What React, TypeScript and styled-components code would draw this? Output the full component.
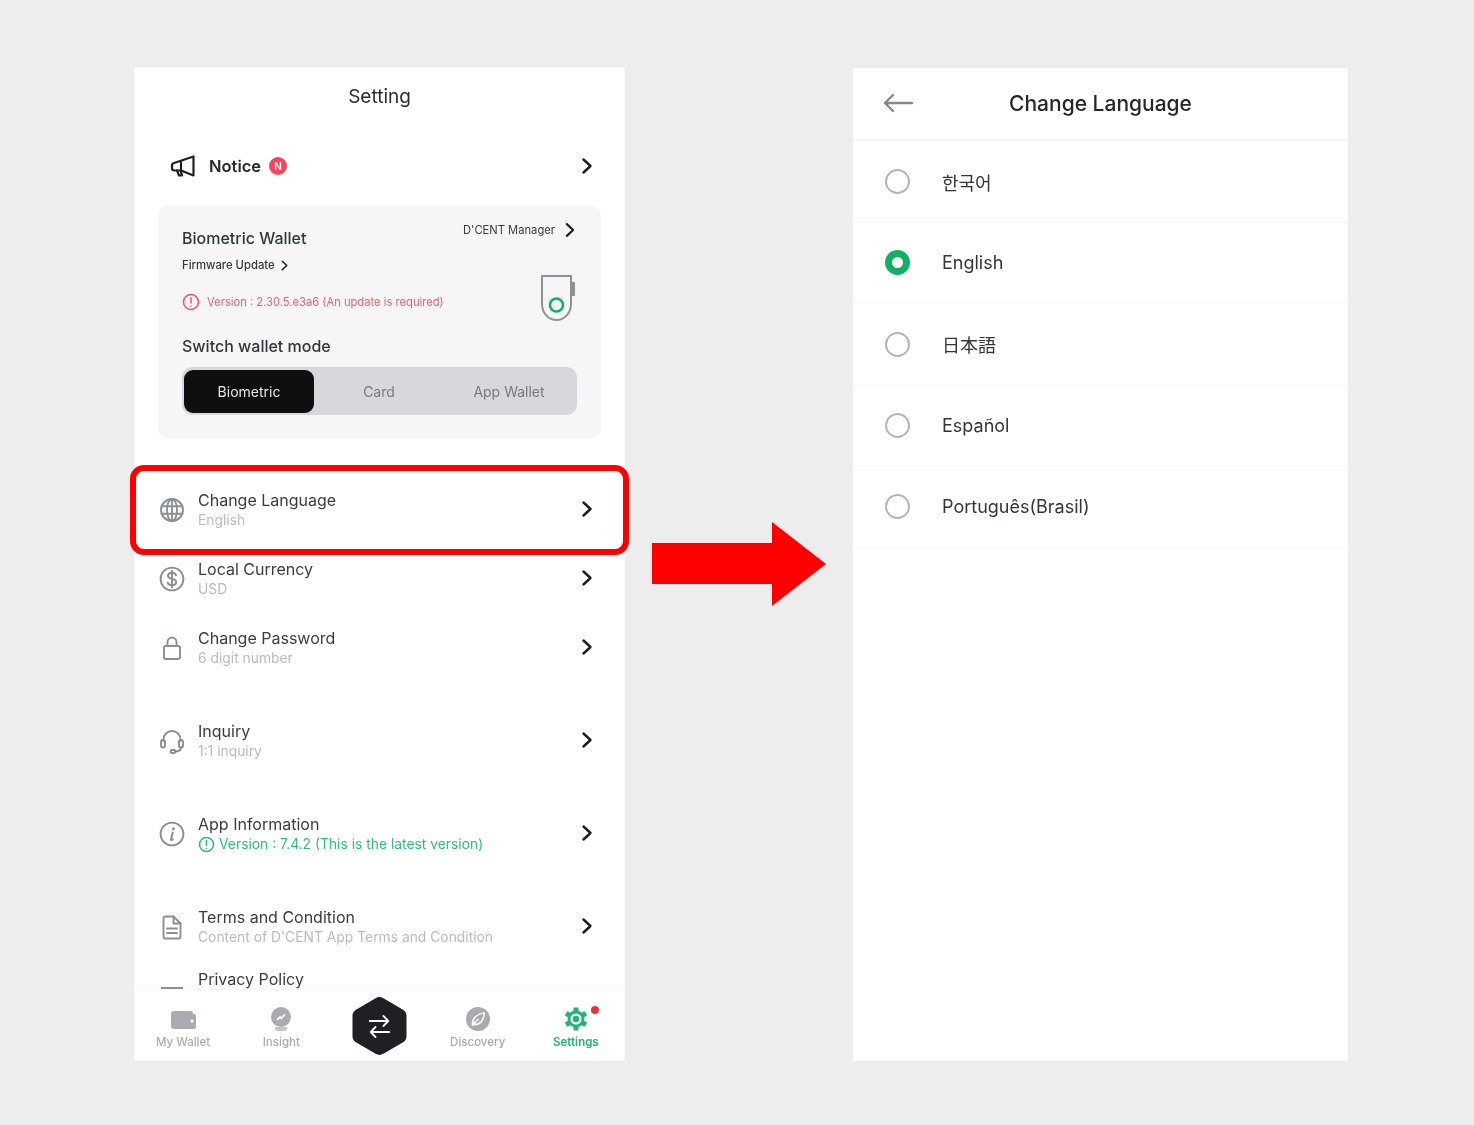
import React from 'react';
import styled, { createGlobalStyle } from 'styled-components';

const GlobalStyle = createGlobalStyle`
  html, body {
    margin: 0;
    padding: 0;
    background: #ededed;
  }
  * {
    box-sizing: border-box;
  }
`;

const Page = styled.div`
  width: 1474px;
  height: 1125px;
  display: flex;
  align-items: flex-start;
  padding: 67px 0 0 134px;
  background: #ededed;
  font-family: Inter, "Noto Sans CJK KR", sans-serif;
  overflow: hidden;
  filter: blur(0.4px);
`;

const Phone = styled.div`
  width: 491px;
  height: 994px;
  display: flex;
  flex-direction: column;
  background: #fff;
`;

const Title = styled.div`
  height: 59px;
  margin-bottom: 1px;
  display: flex;
  align-items: center;
  justify-content: center;
  font-size: 19px;
  color: #2b2d31;
`;

const NoticeRow = styled.div`
  height: 78px;
  display: flex;
  align-items: center;
  padding: 0 28px 0 36px;
`;

const NoticeLabel = styled.span`
  margin-left: 13px;
  font-size: 16.5px;
  font-weight: 600;
  color: #26282c;
`;

const NoticeBadge = styled.span`
  width: 18px;
  height: 18px;
  margin-left: 8px;
  border-radius: 50%;
  background: #f9455c;
  color: #fff;
  font-size: 10px;
  font-weight: 600;
  display: flex;
  align-items: center;
  justify-content: center;
`;

const Chevron = styled.svg`
  width: 20px;
  height: 20px;
  margin-left: auto;
  flex: none;
  fill: none;
  stroke: #1c1d20;
  stroke-width: 2.4;
  stroke-linecap: round;
  stroke-linejoin: round;
`;

const RowChevron = styled(Chevron)`
  margin-top: -2px;
`;

const WalletCard = styled.div`
  width: 443px;
  height: 234px;
  margin: 0 24px 36.5px;
  padding: 16px 24px 0;
  border-radius: 12px;
  background: #f6f6f6;
  display: flex;
  flex-direction: column;
`;

const CardTop = styled.div`
  display: flex;
  align-items: flex-start;
  justify-content: space-between;
`;

const CardTitle = styled.div`
  margin-top: 8px;
  font-size: 16px;
  font-weight: 500;
  line-height: 19px;
  color: #33353a;
`;

const ManagerLink = styled.div`
  display: flex;
  align-items: center;
  gap: 6px;
  margin-right: -2px;
  font-size: 11.2px;
  color: #3a3c41;
`;

const SmallChevron = styled(Chevron)<{ $size: number }>`
  margin-left: 0;
  width: ${(props) => props.$size}px;
  height: ${(props) => props.$size}px;
`;

const FirmwareLink = styled.div`
  margin-top: 9px;
  height: 16px;
  display: flex;
  align-items: center;
  gap: 3px;
  font-size: 11.3px;
  font-weight: 500;
  color: #36383d;
`;

const VersionRow = styled.div`
  display: flex;
  align-items: center;
  justify-content: space-between;
  height: 66px;
`;

const VersionText = styled.div`
  display: flex;
  align-items: center;
  gap: 7px;
  font-size: 11.2px;
  color: #ef5f72;
  margin-top: -8px;
`;

const DeviceIcon = styled.svg`
  width: 37px;
  height: 50px;
  flex: none;
  margin-right: 1px;
  margin-top: -16px;
`;

const SwitchLabel = styled.div`
  margin-top: -2px;
  font-size: 16px;
  font-weight: 500;
  line-height: 19px;
  color: #33353a;
`;

const Segments = styled.div`
  margin-top: 11px;
  height: 48px;
  padding: 3px 2px 2px;
  display: grid;
  grid-template-columns: repeat(3, 130px);
  border-radius: 10px;
  background: #d7d8dc;
`;

const Segment = styled.div<{ $active?: boolean }>`
  display: flex;
  align-items: center;
  justify-content: center;
  border-radius: 9px;
  font-size: 14px;
  background: ${(props) => (props.$active ? '#0f0f10' : 'transparent')};
  color: ${(props) => (props.$active ? '#e4e4e6' : '#77797f')};
`;

const MenuList = styled.div`
  flex: 1;
  min-height: 0;
  display: flex;
  flex-direction: column;
  clip-path: inset(-20px -10px 0 -10px);
`;

const MenuRow = styled.div<{ $tall?: boolean; $highlight?: boolean }>`
  position: relative;
  height: ${(props) => (props.$tall ? 93 : 69)}px;
  flex: none;
  display: flex;
  align-items: center;
  padding: 0 28px 0 25px;

  ${(props) =>
    props.$highlight &&
    `&::after {
      content: '';
      position: absolute;
      left: -4px;
      right: -4px;
      top: -10.5px;
      bottom: -10.5px;
      border: 6px solid #ff0000;
      border-radius: 14px;
    }`}
`;

const SectionGap = styled.div`
  height: 12px;
  flex: none;
`;

const MenuIcon = styled.svg`
  width: 26px;
  height: 26px;
  flex: none;
  fill: none;
  stroke: #8b8e97;
  stroke-width: 1.9;
  stroke-linecap: round;
  stroke-linejoin: round;
`;

const MenuText = styled.div`
  margin-left: 13px;
  display: flex;
  flex-direction: column;
`;

const MenuTitle = styled.div`
  font-size: 16px;
  line-height: 20px;
  color: #3a3c41;
`;

const MenuSub = styled.div<{ $green?: boolean }>`
  display: flex;
  align-items: center;
  gap: 4px;
  font-size: 13.85px;
  line-height: 20px;
  color: ${(props) => (props.$green ? '#2fbd7c' : '#b9bbc0')};
`;

const ClippedRow = styled.div`
  height: 40px;
  margin-top: -5px;
  flex: none;
  display: flex;
  align-items: flex-start;
  padding: 0 28px 0 27px;
`;

const ClippedIcon = styled.div`
  width: 22px;
  height: 2px;
  margin-top: 18px;
  background: #8b8e97;
`;

const ClippedTitle = styled(MenuTitle)`
  margin-left: 15px;
`;

const TabBar = styled.div`
  position: relative;
  height: 72px;
  flex: none;
  display: grid;
  grid-template-columns: repeat(5, 1fr);
  border-top: 1px solid #f6f6f6;
  background: #fff;
`;

const Tab = styled.div<{ $active?: boolean; $center?: boolean }>`
  position: relative;
  display: flex;
  flex-direction: column;
  align-items: center;
  padding-top: ${(props) => (props.$center ? 0 : 17)}px;
  font-size: 11.5px;
  font-weight: ${(props) => (props.$active ? 600 : 500)};
  color: ${(props) => (props.$active ? '#22b573' : '#a9abb0')};
`;

const TabIcon = styled.svg`
  width: 28px;
  height: 26px;
  margin-bottom: 2px;
  flex: none;
`;

const Dot = styled.span`
  position: absolute;
  top: 16px;
  left: 64px;
  width: 8px;
  height: 8px;
  border-radius: 50%;
  background: #e8333a;
`;

const SwapHex = styled.svg`
  width: 55px;
  height: 60px;
  margin-top: 6px;
  flex: none;
`;

const ArrowColumn = styled.div`
  width: 228px;
  height: 994px;
  flex: none;
  display: flex;
  justify-content: center;
  padding-top: 455px;
`;

const BigArrow = styled.svg`
  width: 174px;
  height: 84px;
  flex: none;
`;

const LanguagePanel = styled.div`
  width: 495px;
  height: 993px;
  margin-top: 1px;
  background: #fff;
  display: flex;
  flex-direction: column;
`;

const PanelHeader = styled.div`
  position: relative;
  height: 73.4px;
  flex: none;
  display: flex;
  align-items: center;
  justify-content: center;
  border-bottom: 2px solid #f7f7f7;
  font-size: 21px;
  font-weight: 500;
  color: #25272b;
`;

const BackIcon = styled.svg`
  position: absolute;
  left: 30px;
  top: 24px;
  width: 30px;
  height: 22px;
  fill: none;
  stroke: #85878f;
  stroke-width: 2.4;
  stroke-linecap: round;
  stroke-linejoin: round;
`;

const LangRow = styled.div`
  height: 81.3px;
  flex: none;
  display: flex;
  align-items: center;
  gap: 32px;
  padding-left: 32px;
  border-bottom: 1px solid #f8f8f8;
  font-size: 18px;
  color: #33353a;
`;

const Radio = styled.span<{ $checked?: boolean }>`
  width: 25px;
  height: 25px;
  flex: none;
  border-radius: 50%;
  background: #fff;
  border: ${(props) => (props.$checked ? '7.5px solid #0fb066' : '2px solid #b4b5bc')};
`;

const languages = [
  { label: '한국어' },
  { label: 'English', checked: true },
  { label: '日本語' },
  { label: 'Español' },
  { label: 'Português(Brasil)' },
];

const chevronPath = <path d="M6.5 3.5 13.5 10 6.5 16.5" />;

const menuIcons: Record<string, React.ReactNode> = {
  globe: (
    <>
      <circle cx="13" cy="13" r="11" />
      <ellipse cx="13" cy="13" rx="5" ry="11" />
      <path d="M2.6 9.3h20.8M2.6 16.7h20.8M13 2v22" />
    </>
  ),
  dollar: (
    <>
      <circle cx="13" cy="13" r="11.4" />
      <path d="M17 9.2c-.6-1.6-2.2-2.4-4-2.4-2.3 0-4 1.2-4 3 0 4.2 8.2 2.1 8.2 6.2 0 1.9-1.8 3.2-4.2 3.2-2 0-3.7-.9-4.3-2.6M13 4.6v16.8" />
    </>
  ),
  lock: (
    <>
      <rect x="5" y="11" width="16" height="13" rx="2" />
      <path d="M8.5 11V7a4.5 4.5 0 0 1 9 0v4" />
    </>
  ),
  headset: (
    <>
      <path d="M4.5 13v-1.5a8.5 8.5 0 0 1 17 0V13" />
      <rect x="2" y="12" width="4" height="7.5" rx="2" />
      <rect x="20" y="12" width="4" height="7.5" rx="2" />
      <path d="M22 19.5c0 2.5-2.5 4-6 4" />
      <rect x="11.5" y="22" width="5" height="3" rx="1.5" />
    </>
  ),
  info: (
    <>
      <circle cx="13" cy="13" r="11.4" />
      <path d="M13.8 11.5 12 18.3c-.2.8.6 1 1.7.2" strokeWidth="2" />
      <circle cx="14.4" cy="7.8" r=".6" strokeWidth="1.8" />
    </>
  ),
  file: (
    <>
      <path d="M4.5 4.5a2 2 0 0 1 2-2h8l7 7v13a2 2 0 0 1-2 2h-13a2 2 0 0 1-2-2z" />
      <path d="M14.5 2.5v7h7M8 14.5h10M8 19h10" />
    </>
  ),
};

const menu = [
  { icon: 'globe', title: 'Change Language', sub: 'English', highlight: true },
  { icon: 'dollar', title: 'Local Currency', sub: 'USD' },
  { icon: 'lock', title: 'Change Password', sub: '6 digit number' },
  { icon: 'headset', title: 'Inquiry', sub: '1:1 inquiry', tall: true, gap: true },
  { icon: 'info', title: 'App Information', sub: 'Version : 7.4.2 (This is the latest version)', tall: true, green: true },
  { icon: 'file', title: 'Terms and Condition', sub: "Content of D'CENT App Terms and Condition", tall: true },
];

const Settings = () => (
  <Phone>
    <Title>Setting</Title>
    <NoticeRow>
      <svg width="26" height="24" viewBox="0 0 26 24" fill="none" stroke="#1f2023" strokeWidth="2.2" strokeLinejoin="round" strokeLinecap="round">
        <path d="M23.5 2.5v19L11 16.5H4.5A2.5 2.5 0 0 1 2 14v-2.5A2.5 2.5 0 0 1 4 9z" />
        <path d="M7 16.5 9 21.5h3l-1.5-5" />
        <path d="M11 8v8.5" />
      </svg>
      <NoticeLabel>Notice</NoticeLabel>
      <NoticeBadge>N</NoticeBadge>
      <Chevron viewBox="0 0 20 20">{chevronPath}</Chevron>
    </NoticeRow>
    <WalletCard>
      <CardTop>
        <CardTitle>Biometric Wallet</CardTitle>
        <ManagerLink>
          D'CENT Manager
          <SmallChevron $size={18} viewBox="0 0 20 20">{chevronPath}</SmallChevron>
        </ManagerLink>
      </CardTop>
      <FirmwareLink>
        Firmware Update
        <SmallChevron $size={13} viewBox="0 0 20 20">{chevronPath}</SmallChevron>
      </FirmwareLink>
      <VersionRow>
        <VersionText>
          <svg width="18" height="18" viewBox="0 0 18 18" fill="none" stroke="#ef5268" strokeWidth="1.5" strokeLinecap="round">
            <circle cx="9" cy="9" r="7.5" />
            <path d="M9 5v5M9 13v.1" />
          </svg>
          Version : 2.30.5.e3a6 (An update is required)
        </VersionText>
        <DeviceIcon viewBox="0 0 37 50" fill="none">
          <path d="M3 3h29v28a14.5 16 0 0 1-29 0z" stroke="#8f9197" strokeWidth="2" strokeLinejoin="round" />
          <rect x="32" y="9" width="4" height="14" rx="1" fill="#8f9197" />
          <circle cx="17.5" cy="32" r="6.5" stroke="#0fb066" strokeWidth="2.5" />
        </DeviceIcon>
      </VersionRow>
      <SwitchLabel>Switch wallet mode</SwitchLabel>
      <Segments>
        <Segment $active>Biometric</Segment>
        <Segment>Card</Segment>
        <Segment>App Wallet</Segment>
      </Segments>
    </WalletCard>
    <MenuList>
      {menu.map((item) => (
        <React.Fragment key={item.title}>
          {item.gap && <SectionGap />}
          <MenuRow $tall={item.tall} $highlight={item.highlight}>
            <MenuIcon viewBox="0 0 26 26">{menuIcons[item.icon]}</MenuIcon>
            <MenuText>
              <MenuTitle>{item.title}</MenuTitle>
              <MenuSub $green={item.green}>
                {item.green && (
                  <svg width="17" height="17" viewBox="0 0 17 17" fill="none" stroke="#2fbd7c" strokeWidth="1.6" strokeLinecap="round">
                    <circle cx="8.5" cy="8.5" r="7" />
                    <path d="M8.5 4.5v5M8.5 12.5v.1" />
                  </svg>
                )}
                {item.sub}
              </MenuSub>
            </MenuText>
            <RowChevron viewBox="0 0 20 20">{chevronPath}</RowChevron>
          </MenuRow>
        </React.Fragment>
      ))}
      <ClippedRow>
        <ClippedIcon />
        <ClippedTitle>Privacy Policy</ClippedTitle>
      </ClippedRow>
    </MenuList>
    <TabBar>
      <Tab>
        <TabIcon viewBox="0 0 28 26">
          <path d="M2 7a3 3 0 0 1 3-3h17a2 2 0 0 1 2 2v1h1a2 2 0 0 1 2 2v11a2 2 0 0 1-2 2H5a3 3 0 0 1-3-3z" fill="#a9abb0" />
          <circle cx="23" cy="14" r="1.5" fill="#fff" />
        </TabIcon>
        My Wallet
      </Tab>
      <Tab>
        <TabIcon viewBox="0 0 28 26">
          <circle cx="14" cy="10" r="10" fill="#a9abb0" />
          <path d="M8 20h12v2l-2 2h-8l-2-2z" fill="#a9abb0" opacity=".7" />
          <path d="M10 13l3-3 1.5 1.5L18 7" stroke="#fff" strokeWidth="1.8" fill="none" />
        </TabIcon>
        Insight
      </Tab>
      <Tab $center>
        <SwapHex viewBox="0 0 56 60" preserveAspectRatio="none">
          <path d="M24 2.2a8 8 0 0 1 8 0l20 11.5a7 7 0 0 1 3.5 6v20.6a7 7 0 0 1-3.5 6L32 57.8a8 8 0 0 1-8 0L4 46.3a7 7 0 0 1-3.5-6V19.7a7 7 0 0 1 3.5-6z" fill="#1f2024" />
          <path d="M18 25h19M32 20l5 5-5 5M38 36H19M24 31l-5 5 5 5" stroke="#fff" strokeWidth="1.8" fill="none" strokeLinecap="round" strokeLinejoin="round" />
        </SwapHex>
      </Tab>
      <Tab>
        <TabIcon viewBox="0 0 28 26">
          <circle cx="14" cy="12" r="12" fill="#a9abb0" />
          <path d="M8.5 18C8 11 13 7 20 6c0 7-3.5 11.5-9.5 11.5zM8.5 18l6-6" stroke="#fff" strokeWidth="1.6" fill="none" />
        </TabIcon>
        Discovery
      </Tab>
      <Tab $active>
        <TabIcon viewBox="0 0 28 26">
          <g fill="#22b573">
            <circle cx="14" cy="12" r="8.5" />
            <rect x="11.5" y="0.5" width="5" height="23" rx="1" />
            <rect x="11.5" y="0.5" width="5" height="23" rx="1" transform="rotate(60 14 12)" />
            <rect x="11.5" y="0.5" width="5" height="23" rx="1" transform="rotate(120 14 12)" />
          </g>
          <circle cx="14" cy="12" r="5.6" fill="#fff" />
          <circle cx="14" cy="12" r="3.3" fill="#22b573" />
        </TabIcon>
        Settings
        <Dot />
      </Tab>
    </TabBar>
  </Phone>
);

const Language = () => (
  <LanguagePanel>
    <PanelHeader>
      <BackIcon viewBox="0 0 30 22">
        <path d="M29 11H2M10 3l-8 8 8 8" />
      </BackIcon>
      Change Language
    </PanelHeader>
    {languages.map((lang) => (
      <LangRow key={lang.label}>
        <Radio $checked={lang.checked} />
        {lang.label}
      </LangRow>
    ))}
  </LanguagePanel>
);

export default function App() {
  return (
    <Page>
      <GlobalStyle />
      <Settings />
      <ArrowColumn>
        <BigArrow viewBox="0 0 174 84">
          <polygon points="0,21 120,21 120,0 174,42 120,84 120,62 0,62" fill="#ff0000" />
        </BigArrow>
      </ArrowColumn>
      <Language />
    </Page>
  );
}
